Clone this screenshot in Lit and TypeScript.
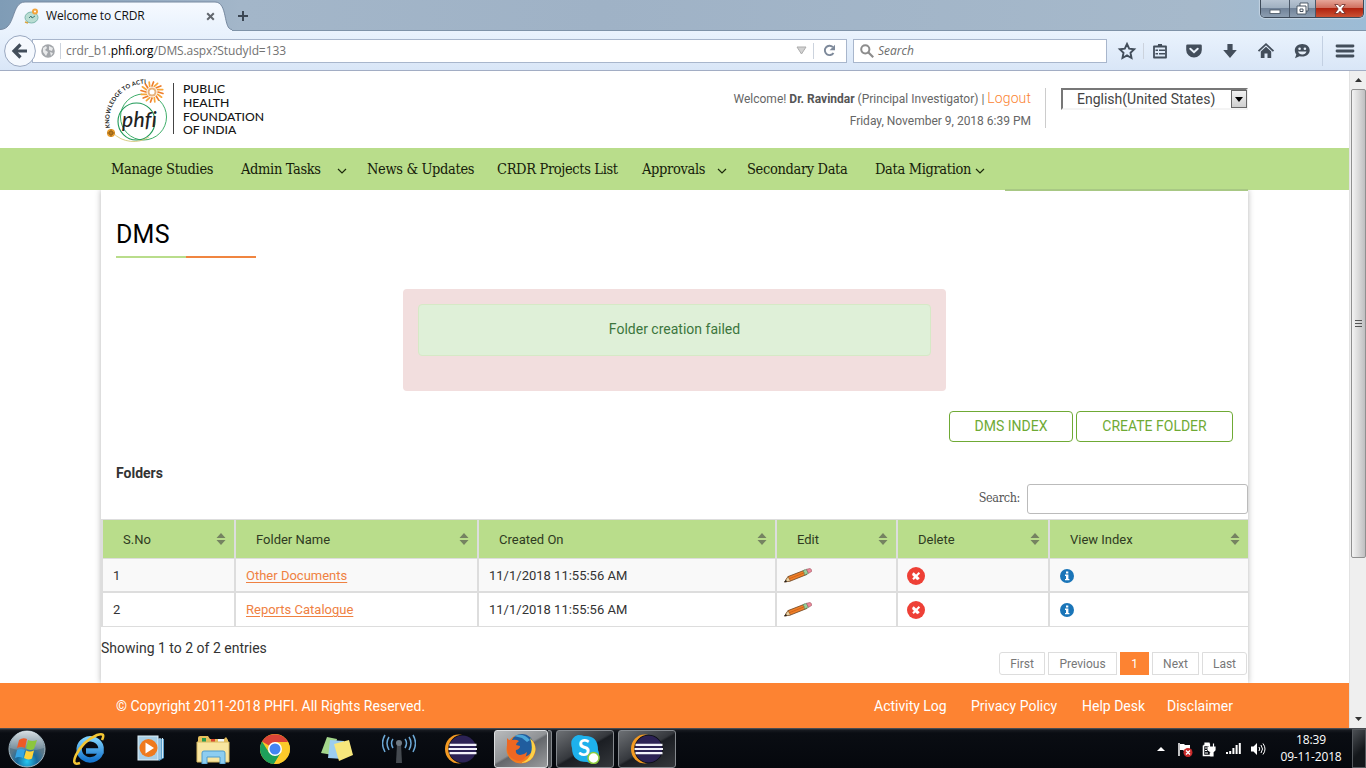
import { LitElement, html, css, svg } from "lit";
import { customElement } from "lit/decorators.js";

const sun = () => {
  const rays = [];
  for (let i = 0; i < 16; i++) {
    const a = (i * Math.PI) / 8;
    const c = Math.cos(a), s = Math.sin(a);
    rays.push(svg`<path d="M${51 + c * 6} ${17 + s * 6}L${51 + c * 11 - s * 1.5} ${17 + s * 10 + c * 1.5}" stroke=${i % 2 ? "#f6a63a" : "#ee7d2b"} stroke-width="1.7" stroke-linecap="round"/>`);
  }
  return rays;
};

const logo = html`<svg class="logo" width="76" height="72" viewBox="0 0 76 72" fill="none">
  <circle cx="42.500" cy="42" r="23" stroke="#3fae6a" stroke-width="1"/>
  <circle cx="35.500" cy="46.500" r="18.500" stroke="#1f9a58" stroke-width="1.100"/>
  <path d="M12 58A29 29 0 0 0 48 62" stroke="#cfc06a" stroke-width=".8"/>
  <circle cx="51" cy="17" r="10.500" fill="#fff"/>
  ${sun()}
  <circle cx="51" cy="17" r="4.500" fill="#e8b27c"/><circle cx="51" cy="17" r="2.500" fill="#fff"/>
  <circle cx="10" cy="58" r="4" fill="#e79a2a"/><circle cx="10" cy="58" r="2" stroke="#8a5a14"/><path d="M6 58h8M10 54v8" stroke="#8a5a14" stroke-width=".6"/>
  <path id="arc" d="M9 53A37.500 37.500 0 0 1 47 8.500"/>
  <text class="motto"><textPath href="#arc">KNOWLEDGE TO ACTION</textPath></text>
  <text class="phfi" x="21" y="52">phfi</text>
</svg>`;

const chev = html`<svg width="10" height="6" viewBox="0 0 10 6"><path d="M1 1l4 4 4-4" fill="none" stroke="#1c2a0c" stroke-width="1.200"/></svg>`;
const sort = html`<svg width="10" height="12" viewBox="0 0 10 12"><path d="M.5 5L5 0l4.500 5zM.5 7h9L5 12z" fill="#758361"/></svg>`;
const pencil = html`<svg width="28" height="16" viewBox="0 0 28 16"><path d="M.6 14L4 8.600 21 2l2 4.400L6.500 13z" fill="#f08028" stroke="#6b4423" stroke-width=".8"/><path d="M.6 14L4 8.600l2.500 4.400z" fill="#ecd3a4" stroke="#6b4423" stroke-width=".5"/><path d="M.3 14.300l1.600-2.600 1.200 2z" fill="#222"/><path d="M19 2.600l3.500-1.300 2 4-3.800 1.600z" fill="#98cf9a" stroke="#50805c" stroke-width=".6"/><path d="M22.500 1.300l3.500-.8q1.800.4 1.600 3l-3.100 1.800z" fill="#ee8a9a" stroke="#9a5060" stroke-width=".6"/><path d="M5 10.800L20.500 4.700" stroke="#c85d18" stroke-width=".8"/></svg>`;
const del = html`<svg width="18" height="18" viewBox="0 0 18 18"><circle cx="9" cy="9" r="9" fill="#ee4036"/><path d="M5.600 7L11 12.400M12.400 5.800L6 12.200M6 6l6 6" stroke="#fff" stroke-width="2.100"/></svg>`;
const info = html`<svg width="14" height="14" viewBox="0 0 14 14"><circle cx="7" cy="7" r="7" fill="#1a75b8"/><path d="M6 2.500h2.300v2H6zM5 5.600h3.400v4.300h1v1.400H5V9.900h1V7H5z" fill="#fff"/></svg>`;
const eclipse = html`<svg width="32" height="30" viewBox="0 0 32 30"><ellipse cx="13.500" cy="15" rx="13.500" ry="14.500" fill="#f49a22"/><circle cx="17.500" cy="15" r="14.300" fill="#0a0d14"/><circle cx="17.500" cy="15" r="13.600" fill="#2c2255"/><path d="M4.500 10.800h27M3.500 15h28.500M4.500 19.200h27" stroke="#f2f2fa" stroke-width="2.200"/></svg>`;

const icons = {
  star: svg`<path d="M10 3l2.200 4.700 5 .6-3.700 3.500 1 5.200-4.500-2.600-4.500 2.600 1-5.200L2.800 8.300l5-.6z" fill="none" stroke="#434e5b" stroke-width="1.900"/>`,
  list: svg`<path d="M4 5.500h12v11H4z" fill="none" stroke="#434e5b" stroke-width="1.800" stroke-linejoin="round"/><path d="M6 6l2-1.500V3h4v1.500L14 6z" fill="#434e5b"/><path d="M5.500 9.300H8m1 0h6M5.500 12.800H8m1 0h6" stroke="#434e5b" stroke-width="1.500"/>`,
  pocket: svg`<path d="M3.500 3.500h13q1.300 0 1.300 1.300V9a7.800 7.500 0 0 1-15.600 0V4.800q0-1.300 1.300-1.300z" fill="#434e5b"/><path d="M6.300 7.800l3.700 3.400 3.700-3.400" fill="none" stroke="#eaf2fb" stroke-width="2" stroke-linecap="round"/>`,
  down: svg`<path d="M7.400 3h5.200v6h4.200L10 17 3.200 9h4.200z" fill="#434e5b"/>`,
  home: svg`<path d="M2.500 10.200L10 3.200l7.500 7" fill="none" stroke="#434e5b" stroke-width="1.800"/><path d="M4.800 10.500L10 5.800l5.200 4.700V17h-3.700v-4.500h-3V17H4.800z" fill="#434e5b"/>`,
  chat: svg`<path d="M10.300 3c4.200 0 7.400 2.800 7.400 6.300s-3.200 6.300-7.400 6.300c-1 0-2-.1-2.800-.4L3 17.200l1.300-3.600C3.300 12.400 2.800 11 2.800 9.300 2.800 5.800 6.100 3 10.300 3z" fill="#434e5b"/><circle cx="7.600" cy="7.800" r="1.300" fill="#e6effa"/><circle cx="12.900" cy="7.800" r="1.300" fill="#e6effa"/><path d="M6 10.600h8.500q-1 3-4.200 3t-4.300-3z" fill="#e6effa"/>`,
  menu: svg`<path d="M2 5h16M2 10h16M2 15h16" stroke="#434e5b" stroke-width="2.800" stroke-linecap="round"/>`,
};
const tool = (k: keyof typeof icons) => html`<span class="tool"><svg width="20" height="20" viewBox="0 0 20 20">${icons[k]}</svg></span>`;

@customElement("browser-chrome")
class BrowserChrome extends LitElement {
  static styles = css`
    :host { display: block; height: 71px; box-sizing: border-box; font: 12px "Open Sans", "Noto Sans", sans-serif; color: #111; border-bottom: 1px solid #a2adc4; }
    .strip { display: flex; height: 30px; background: linear-gradient(90deg, #7f9cb6 0, #a3b6c9 240px, #9fb2c6 600px, #a6b9cb 1200px, #9cbcd6 1366px); }
    .tab { display: grid; width: 232px; height: 31px; z-index: 1; }
    .tab > * { grid-area: 1 / 1; }
    .tabtext { display: flex; align-items: center; padding-left: 24px; padding-top: 1px; gap: 6px; }
    .title { width: 154px; line-height: 28px; letter-spacing: -0.13px; }
    .plus { margin: 10px 0 0 5px; }
    .win { margin-left: auto; margin-right: 2px; display: grid; grid-template-columns: 29px 26px 47px; height: 18px; border: 1px solid #3d4a59; border-top: 0; border-radius: 0 0 5px 5px; box-shadow: 0 0 1px 1px #c3d3e2; overflow: hidden; box-sizing: border-box; }
    .wb { background: linear-gradient(#b7c4d2 0, #9fafc0 48%, #718399 50%, #8c9db0 100%); border-right: 1px solid #4b5868; display: grid; place-items: center; }
    .red { background: linear-gradient(#e6a598 0, #cf6d5c 48%, #b1230f 50%, #cb5133 100%); border: 0; }
    .bar { display: flex; align-items: center; height: 40px; box-sizing: border-box; border-top: 1px solid #7f93a8; background: linear-gradient(#eaf3fd, #d9e6f7); }
    .back { margin-left: 4px; width: 32px; height: 32px; z-index: 1; flex: none; }
    .url { display: flex; align-items: center; margin-left: -4px; width: 815px; height: 24px; box-sizing: border-box; border: 1px solid #a8b6cc; background: #fff; padding-left: 8px; }
    .sep { width: 1px; height: 16px; background: #ccd3dd; }
    .sep.s1 { margin: 0 5px; }
    .addr { flex: 1; color: #727272; letter-spacing: -0.1px; line-height: 20px; }
    .addr b { font-weight: 400; color: #000; }
    .drop { margin-right: 6px; }
    .reload { margin: 0 10px 0 9px; }
    .search { display: flex; align-items: center; gap: 4px; margin-left: 6px; width: 254px; height: 24px; box-sizing: border-box; border: 1px solid #a8b6cc; background: #fff; padding-left: 6px; color: #6c6c6c; font-style: italic; }
    .tools { display: grid; align-items: center; margin-left: 3px; grid-template-columns: 33px 1px 32px 36px 36px 36px 36px 2px 1px 43px; }
    .tool { display: grid; place-items: center; }
    .tall { width: 1px; height: 30px; background: #c3d0e2; }
  `;
  render() {
    return html`<div class="strip">
        <div class="tab"><svg width="232" height="31" viewBox="0 0 232 31"><defs><linearGradient id="g" x2="0" y2="1"><stop stop-color="#f6faff"/><stop offset="1" stop-color="#e9f2fd"/></linearGradient></defs><path d="M0 31v-1.500C16 29.500 11 2 25 2h190c13 0 8 27.500 17 27.500V31z" fill="url(#g)"/><path d="M0 29.500C16 29.500 11 2 25 2h190c13 0 8 27.500 17 27.500" fill="none" stroke="#7689a0"/></svg>
          <div class="tabtext">
            <svg width="16" height="16" viewBox="0 0 16 16"><ellipse cx="7.500" cy="9.500" rx="6.500" ry="5.500" fill="#b9ddd2" stroke="#7fb9ae"/><path d="M5 10l2-2 1 2 3-2" stroke="#427b78" fill="none"/><circle cx="11" cy="3.500" r="3" fill="#f2a43c"/><circle cx="11" cy="3.500" r="1" fill="#fff"/><path d="M1 14l3 1" stroke="#d9a33e" stroke-width="1.500"/></svg>
            <span class="title">Welcome to CRDR</span>
            <svg width="9" height="9" viewBox="0 0 9 9"><path d="M1.200 1.200l6.600 6.600M7.800 1.200L1.200 7.800" stroke="#62676e" stroke-width="2"/></svg>
          </div></div>
        <svg class="plus" width="12" height="12" viewBox="0 0 12 12"><path d="M6 1v10M1 6h10" stroke="#3b4653" stroke-width="2"/></svg>
        <div class="win">
          <span class="wb"><svg width="12" height="12" viewBox="0 0 12 12"><rect x="1" y="7" width="10" height="3.500" fill="#fff" stroke="#44505e" stroke-width=".8"/></svg></span>
          <span class="wb"><svg width="13" height="13" viewBox="0 0 13 13"><path d="M4 1h8v8h-2v3H1V4h3z" fill="#fff" stroke="#44505e" stroke-width=".9"/><path d="M4 4h6v5M4 7h3v2.500H4z" fill="none" stroke="#44505e"/></svg></span>
          <span class="wb red"><svg width="12" height="12" viewBox="0 0 12 12"><path d="M.8 1.500h3.300L6 3.800l1.900-2.300h3.300L7.800 6l3.400 4.500H7.900L6 8.200l-1.900 2.300H.8L4.200 6z" fill="#fff" stroke="#6b2a26" stroke-width=".8"/></svg></span>
        </div>
      </div>
      <div class="bar">
        <svg class="back" viewBox="0 0 32 32"><circle cx="16" cy="16" r="15.400" fill="#f5f9fe" stroke="#98a7bf"/><path d="M23 16H11M16.500 9.500L10 16l6.500 6.500" fill="none" stroke="#434e5b" stroke-width="3.200"/></svg>
        <div class="url">
          <svg width="14" height="14" viewBox="0 0 14 14"><circle cx="7" cy="7" r="6.800" fill="#a3a6aa"/><path d="M2 4l3-2 1 2-2 2 3 2-2 4-3-4zM8 2l4 2-1 3-3-1zM9 8l3 1-2 3z" fill="#e8e9ea"/></svg>
          <span class="sep s1"></span>
          <span class="addr">crdr_b1.<b>phfi.org</b>/DMS.aspx?StudyId=133</span>
          <svg class="drop" width="11" height="9" viewBox="0 0 11 9"><path d="M1 1h9L5.500 8z" fill="#d2d2d2" stroke="#acacac"/></svg>
          <span class="sep"></span>
          <svg class="reload" width="13" height="13" viewBox="0 0 13 13"><path d="M10.500 9A4.700 4.700 0 1 1 9.800 3" fill="none" stroke="#7d899a" stroke-width="1.900"/><path d="M12 .8v5.400H6.600z" fill="#7d899a"/></svg>
        </div>
        <div class="search"><svg width="14" height="14" viewBox="0 0 14 14"><circle cx="5.300" cy="5.300" r="4.100" fill="none" stroke="#8c8c8c" stroke-width="2"/><path d="M8.500 8.500l4.700 4.700" stroke="#8c8c8c" stroke-width="2.200"/></svg><span>Search</span></div>
        <div class="tools">${tool("star")}<span class="sep"></span>${tool("list")}${tool("pocket")}${tool("down")}${tool("home")}${tool("chat")}<span></span><span class="tall"></span>${tool("menu")}</div>
      </div>`;
  }
}

@customElement("site-page")
class SitePage extends LitElement {
  static styles = css`
    :host { display: flex; height: 657px; background: #fff; font: 14px/20px Roboto, sans-serif; color: #333; }
    .page { width: 1349px; display: flex; flex-direction: column; }
    .head { display: flex; height: 77px; padding-left: 101px; box-sizing: border-box; }
    .logo { margin-top: 4px; overflow: visible; }
    .motto { font: 700 5.900px Lato, sans-serif; fill: #222; letter-spacing: 0.18px; }
    .phfi { font: italic 500 21px Lato, sans-serif; fill: #222; letter-spacing: 0.3px; }
    .rule { width: 1px; height: 51px; margin: 12px 0 0 -4px; background: #444; }
    .org { margin: 11px 0 0 9px; font: 500 12.200px/13.800px Lato, sans-serif; color: #151515; width: 100px; }
    .who { margin-left: auto; margin-top: 17px; width: 330px; height: 40px; border-right: 1px solid #ccc; padding-right: 14px; text-align: right; font-size: 12px; color: #666; box-sizing: border-box; white-space: nowrap; }
    .line1 { height: 23px; line-height: 21px; }
    .line2 { line-height: 21px; }
    .who b { color: #555; }
    .who a { color: #fb8332; font-size: 14px; font-weight: 300; letter-spacing: 0.1px; }
    .lang { display: flex; justify-content: space-between; width: 187px; height: 22px; margin: 17px 101px 0 15px; box-sizing: border-box; border: 2px solid; border-color: #777 #f0f0f0 #f4f4f4 #777; padding-left: 14px; line-height: 19px; font-size: 14px; color: #444; }
    .pick { width: 16px; height: 18px; margin-right: -1px; background: linear-gradient(#f2f2f2, #cfcfcf); border: 1px solid #666; box-sizing: border-box; display: grid; place-items: center; }
    .nav { display: grid; grid-template-columns: 130px 126px 130px 145px 105px 128px 130px 243px; height: 42px; padding-left: 111px; background: #b9dd8b; font: 14.500px/43px "Roboto Slab", "DejaVu Serif Condensed", "DejaVu Serif", serif; font-stretch: condensed; color: #16200a; white-space: nowrap; }
    .item { display: flex; align-items: center; justify-content: space-between; padding-right: 20px; letter-spacing: -0.35px; }
    .item.plain { justify-content: flex-start; }
    .item svg { margin-top: 3px; }
    .under { align-self: end; height: 2px; background: #a8c884; }
    .main { width: 1147px; height: 493px; margin-left: 101px; box-shadow: 0 0 6px rgba(0, 0, 0, .3); clip-path: inset(0 -8px 0 -8px); display: flex; flex-direction: column; }
    h1 { margin: 28px 0 0 15px; height: 38px; font: 400 25px/34px Roboto, sans-serif; color: #000; letter-spacing: 0.2px; }
    .accent { display: grid; grid-template-columns: 70px 70px; height: 2px; margin-left: 15px; }
    .g { background: #b9dd8b; } .o { background: #f08540; }
    .fail { width: 543px; height: 102px; margin: 31px 0 0 302px; padding: 15px; box-sizing: border-box; border-radius: 4px; background: #f2dede; }
    .msg { height: 52px; box-sizing: border-box; border: 1px solid #d6e9c6; border-radius: 4px; background: #dff0d8; color: #3c763d; line-height: 49px; text-align: center; }
    .acts { display: flex; justify-content: flex-end; gap: 3px; margin: 20px 15px 0 0; }
    .btn { height: 31px; width: 124px; box-sizing: border-box; border: 1px solid #6faa35; border-radius: 4px; color: #6faa35; line-height: 29px; text-align: center; }
    .btn.wide { width: 157px; }
    .sub { margin: 21px 0 0 15px; height: 21px; font-weight: 700; }
    .find { display: flex; justify-content: flex-end; gap: 7px; font: 12.500px/27px "Roboto Slab", "DejaVu Serif Condensed", "DejaVu Serif", serif; font-stretch: condensed; letter-spacing: -0.35px; color: #555; }
    .box { width: 221px; height: 30px; box-sizing: border-box; border: 1px solid #bbb; border-radius: 3px; }
    .row { display: grid; grid-template-columns: 133px 243px 298px 121px 152px 200px; height: 34px; border-bottom: 1px solid #ddd; box-sizing: border-box; font-size: 13px; line-height: 33px; }
    .row.th { margin-top: 5px; height: 40px; border-top: 1px solid #ddd; background: #b9dd8b; line-height: 39px; color: #2f3b22; }
    .row.odd { background: #f9f9f9; border-bottom-width: 2px; height: 34px; }
    .c { border-left: 2px solid #ddd; padding-left: 10px; display: flex; align-items: center; }
    .th .c { padding: 0 8px 0 20px; justify-content: space-between; }
    .th svg { margin-top: -2px; }
    .c a { color: #ef8142; text-decoration: underline; text-underline-offset: 2px; }
    .c.e { padding-left: 7px; } .c.d { padding-left: 9px; } .c.v { padding-left: 10px; }
    .showing { height: 25px; margin-top: 11px; }
    .pages { display: flex; justify-content: flex-end; gap: 3px; padding-right: 1px; margin-top: -11px; }
    .below { margin-top: 0; }
    .p { height: 23px; box-sizing: border-box; border: 1px solid #ddd; font-size: 12px; line-height: 22px; color: #777; text-align: center; width: 46px; }
    .p.first { border-radius: 3px 0 0 3px; } .p.prev { width: 69px; }
    .p.cur { width: 29px; background: #fd8332; border-color: #fd8332; color: #fff; }
    .p.next { width: 47px; } .p.last { width: 45px; border-radius: 0 3px 3px 0; }
    .foot { height: 45px; display: grid; grid-template-columns: 758px 97px 111px 85px 100px; padding-left: 116px; background: #fd8332; color: #fff; line-height: 46px; }
    .scroll { width: 17px; display: flex; flex-direction: column; align-items: center; background: #efefef; box-sizing: border-box; border-left: 1px solid #e2e2e2; }
    .arrow { height: 18px; display: grid; place-items: center; }
    .thumb { width: 15px; height: 469px; box-sizing: border-box; border: 1px solid #909090; border-radius: 2px; background: linear-gradient(90deg, #f3f3f3, #dadada 50%, #bfbfc1); display: grid; place-items: center; }
    .arrow.bot { margin-top: auto; }
  `;
  row(n: string, name: string, odd: boolean) {
    return html`<div class="row ${odd ? "odd" : ""}"><div class="c">${n}</div><div class="c"><a>${name}</a></div><div class="c">11/1/2018 11:55:56 AM</div><div class="c e">${pencil}</div><div class="c d">${del}</div><div class="c v">${info}</div></div>`;
  }
  render() {
    const nav: [string, boolean][] = [["Manage Studies", false], ["Admin Tasks", true], ["News & Updates", false], ["CRDR Projects List", false], ["Approvals", true], ["Secondary Data", false], ["Data Migration", true]];
    return html`<div class="page">
        <div class="head">${logo}<div class="rule"></div><div class="org">PUBLIC<br>HEALTH<br>FOUNDATION<br>OF INDIA</div>
          <div class="who"><div class="line1">Welcome! <b>Dr. Ravindar</b> (Principal Investigator) | <a>Logout</a></div><div class="line2">Friday, November 9, 2018 6:39 PM</div></div>
          <div class="lang"><span>English(United States)</span><span class="pick"><svg width="8" height="5" viewBox="0 0 8 5"><path d="M0 0h8L4 5z" fill="#000"/></svg></span></div>
        </div>
        <div class="nav">${nav.map(([t, d]) => html`<div class="item ${d ? "" : "plain"}"><span>${t}</span>${d ? chev : ""}</div>`)}<div class="under"></div></div>
        <div class="main">
          <h1>DMS</h1>
          <div class="accent"><span class="g"></span><span class="o"></span></div>
          <div class="fail"><div class="msg">Folder creation failed</div></div>
          <div class="acts"><div class="btn">DMS INDEX</div><div class="btn wide">CREATE FOLDER</div></div>
          <div class="sub">Folders</div>
          <div class="find"><span>Search:</span><div class="box"></div></div>
          <div class="row th">${["S.No", "Folder Name", "Created On", "Edit", "Delete", "View Index"].map((h) => html`<div class="c"><span>${h}</span>${sort}</div>`)}</div>
          ${this.row("1", "Other Documents", true)}${this.row("2", "Reports Catalogue", false)}
          <div class="below"><div class="showing">Showing 1 to 2 of 2 entries</div>
          <div class="pages"><div class="p first">First</div><div class="p prev">Previous</div><div class="p cur">1</div><div class="p next">Next</div><div class="p last">Last</div></div></div>
        </div>
        <div class="foot"><span>© Copyright 2011-2018 PHFI. All Rights Reserved.</span><span>Activity Log</span><span>Privacy Policy</span><span>Help Desk</span><span>Disclaimer</span></div>
      </div>
      <div class="scroll"><div class="arrow"><svg width="7" height="4" viewBox="0 0 7 4"><path d="M0 4h7L3.500 0z" fill="#333"/></svg></div>
        <div class="thumb"><svg width="7" height="8" viewBox="0 0 7 8"><path d="M0 .5h7M0 3.500h7M0 6.500h7" stroke="#555"/></svg></div>
        <div class="arrow bot"><svg width="7" height="4" viewBox="0 0 7 4"><path d="M0 0h7L3.500 4z" fill="#333"/></svg></div></div>`;
  }
}

@customElement("task-bar")
class TaskBar extends LitElement {
  static styles = css`
    :host { display: flex; align-items: center; height: 40px; box-sizing: border-box; border-top: 1px solid #4a4d52; background: linear-gradient(#1d2026 0, #0a0d13 4px, #05080d 100%); font: 12px/17px "Open Sans", "Noto Sans", sans-serif; color: #fff; box-shadow: inset 0 1px 0 #262a30; }
    .ic { width: 62px; display: grid; place-items: center; flex: none; }
    .start { width: 54px; margin-right: 4px; }
    .run { height: 38px; box-sizing: border-box; border: 1px solid #85898e; border-radius: 3px; display: grid; place-items: center; background: linear-gradient(150deg, #6d7074 0, #35383d 48%, #1b1e23 52%, #34373b 100%); width: 58px; margin-left: 4px; flex: none; }
    .run.ff { width: 54px; margin-left: 2px; border-color: #dcdee0; background: linear-gradient(150deg, #b9bbbd 0, #8f9295 48%, #64676b 52%, #9a9c9e 100%); }
    .stack { width: 4px; height: 38px; box-sizing: border-box; border: 1px solid #85898e; border-left: 0; border-radius: 0 3px 3px 0; background: #4a4d51; }
    .tray { margin-left: auto; display: grid; grid-template-columns: 25px 24px 24px 25px 24px; place-items: center; }
    .clock { width: 82px; text-align: center; letter-spacing: -0.15px; margin-top: -1px; }
    .desk { width: 14px; height: 39px; box-sizing: border-box; border: 1px solid #55595e; background: linear-gradient(135deg, #4b4f54, #14171b 60%); }
    .s { font: 700 22px Lato, sans-serif; fill: #fff; }
    .e { font: italic 700 39px "Open Sans", sans-serif; fill: url(#blue); }
  `;
  render() {
    return html`
      <div class="ic start"><svg width="38" height="38" viewBox="0 0 38 38"><defs><radialGradient id="orb" cy=".85"><stop stop-color="#25c8f3"/><stop offset=".55" stop-color="#1a6a9c"/><stop offset="1" stop-color="#5b7889"/></radialGradient><linearGradient id="gl" x2="0" y2="1"><stop stop-color="#fff" stop-opacity=".75"/><stop offset="1" stop-color="#fff" stop-opacity=".1"/></linearGradient></defs><circle cx="19" cy="19" r="18" fill="url(#orb)" stroke="#a6b9c3"/><path d="M2 18a17 17 0 0 1 34 0q-17 6-34 0z" fill="url(#gl)"/><path d="M11 10q4-3 8-1l-2 9q-4-2-8 0z" fill="#ee5a26"/><path d="M20 10q4 2 9 0l-3 9q-4 2-8-.5z" fill="#8cc63e"/><path d="M9 20q4-2 8 0l-2 8q-4-2-8 0z" fill="#35a5e5"/><path d="M18 20.500q4 2 8 0l-2 8q-4 2-8-.5z" fill="#ffd33a"/></svg></div>
      <div class="ic"><svg width="34" height="34" viewBox="0 0 34 34"><defs><linearGradient id="blue" x2="0" y2="1"><stop stop-color="#7dd0fb"/><stop offset="1" stop-color="#1676cf"/></linearGradient></defs><path d="M28.500 21A11 10.500 0 1 1 29 15.500V19H14" fill="none" stroke="url(#blue)" stroke-width="5.500"/><path d="M30 8Q34 0 25 3 11 9 4 23q-5 11 4 8" fill="none" stroke="#f3c634" stroke-width="2.600"/></svg></div>
      <div class="ic"><svg width="28" height="27" viewBox="0 0 28 27"><path d="M6 2l21 2v19l-5 3z" fill="#5ea0cc"/><path d="M23 3v21M25.500 3v20" stroke="#d4ebf8"/><rect x="1" y="1" width="20" height="24" fill="#a9cfe6" stroke="#e2f1f9"/><circle cx="11.500" cy="13" r="9" fill="#ef7a1e"/><path d="M8.500 7.500L17 13l-8.500 5.500z" fill="#fff"/></svg></div>
      <div class="ic"><svg width="34" height="30" viewBox="0 0 34 30"><path d="M2 4q0-2 2-2h8l2 3h14l2-2 2 3v22H2z" fill="#e6bf5d"/><path d="M6 4h4v4H6z" fill="#2a9b50"/><path d="M15 5h4v3h-4z" fill="#d9462d"/><path d="M22 5h6v4h-6z" fill="#f3f7fa"/><path d="M1 8h32v20H1z" fill="#f8e5a0" stroke="#d8ba63"/><path d="M6 30V19q0-2 2-2h19q2 0 2 2v11h-5v-7H11v7z" fill="#8dcdf0" stroke="#4f9ccc"/></svg></div>
      <div class="ic"><svg width="30" height="30" viewBox="0 0 30 30"><circle cx="15" cy="15" r="15" fill="#f9c926"/><path d="M15 15L2 7.500A15 15 0 0 1 28 8H15z" fill="#db4437"/><path d="M2 7.500A15 15 0 0 0 14 30l7-11.500-6-3.500-6 3.500z" fill="#1da05a"/><path d="M28 8H15v7l6 3.500L14 30A15 15 0 0 0 28 8z" fill="#fcca2a"/><circle cx="15" cy="15" r="7" fill="#fff"/><circle cx="15" cy="15" r="5.500" fill="#4285f4"/></svg></div>
      <div class="ic"><svg width="32" height="26" viewBox="0 0 32 26"><path d="M6 1l10 2-4 16-12-2z" fill="#a4d68c"/><path d="M9 4l14 1-1 18-15-1z" fill="#9ccdf0"/><path d="M13 8l15-4 4 15-14 6z" fill="#f7e77c"/></svg></div>
      <div class="ic"><svg width="34" height="30" viewBox="0 0 34 30"><path d="M15 10h4l1 19h-6z" fill="#454a50"/><circle cx="17" cy="9" r="3" fill="#6f7982"/><path d="M11 5q-3 4 0 9M7 3q-4 6 0 13M3 1q-5 8 0 17M23 5q3 4 0 9M27 3q4 6 0 13M31 1q5 8 0 17" fill="none" stroke="#6ba7d4" stroke-width="1.500"/></svg></div>
      <div class="ic">${eclipse}</div>
      <div class="run ff"><svg width="30" height="30" viewBox="0 0 30 30"><circle cx="15" cy="15" r="14.500" fill="#f17c20"/><circle cx="16" cy="11.500" r="11.500" fill="#205d9e"/><path d="M8 2q9-4 16 4l-3 2-5-4z" fill="#4aa6d8"/><path d="M24 4q7 7 5 14-3 11-14 11Q23 26 25 19q2-7-1-15z" fill="#fbd147"/><path d="M1 4q2 3 5 2 4-1 7 1-3 2-3 4l4 1q0 3-4 4-1 4 4 5 4 0 7-3-1 9-9 9Q2 25 1 15z" fill="#ee6722"/></svg></div><div class="stack"></div>
      <div class="run"><svg width="30" height="30" viewBox="0 0 30 30"><path d="M8 1q4 0 6 1 14-1 14 14 2 4 0 9-5 6-11 3Q2 28 2 14-1 4 8 1z" fill="#1eb1ec"/><text class="s" x="8" y="22">S</text><circle cx="23.500" cy="24" r="5.500" fill="#fff" stroke="#8ccb3c" stroke-width="1.500"/></svg></div>
      <div class="run">${eclipse}</div>
      <div class="tray">
        <svg width="8" height="4" viewBox="0 0 8 4"><path d="M0 4h8L4 0z" fill="#fff"/></svg>
        <svg width="16" height="16" viewBox="0 0 16 16"><path d="M2 2v13" stroke="#fff" stroke-width="1.500"/><path d="M3 3h4l1 1h5v6H7L6 9H3z" fill="#fff"/><circle cx="11" cy="11.500" r="4.500" fill="#c92a2a"/><path d="M9 9.500l4 4m0-4l-4 4" stroke="#fff" stroke-width="1.400"/></svg>
        <svg width="14" height="16" viewBox="0 0 14 16"><path d="M1.500 4.500h6m-6 0v10h7v-3" fill="none" stroke="#fff" stroke-width="1.600"/><path d="M3 2h4v2H3zM6 6h7v3l-2 2v4H9v-4L6 9zM7.500 2.500v3m4-3v3M3 7h2M3 9.500h2M3 12h3" fill="#fff" stroke="#fff" stroke-width="1.200"/></svg>
        <svg width="15" height="13" viewBox="0 0 15 13"><path d="M1 10v2M4.200 9v3M7.400 6v6M10.600 3v9M13.800 1v11" stroke="#fff" stroke-width="2"/></svg>
        <svg width="15" height="14" viewBox="0 0 15 14"><path d="M0 4.500h2.500L6 1v12L2.500 9.500H0z" fill="#fff"/><path d="M8 5q1.500 2 0 4M10 3q3 4 0 8M12 1.500q4 5.500 0 11" fill="none" stroke="#fff"/></svg>
      </div>
      <div class="clock">18:39<br>09-11-2018</div><div class="desk"></div>`;
  }
}

@customElement("app-root")
class AppRoot extends LitElement {
  static styles = css`:host { display: block; width: 1366px; height: 768px; overflow: hidden; }`;
  render() {
    return html`<browser-chrome></browser-chrome><site-page></site-page><task-bar></task-bar>`;
  }
}
